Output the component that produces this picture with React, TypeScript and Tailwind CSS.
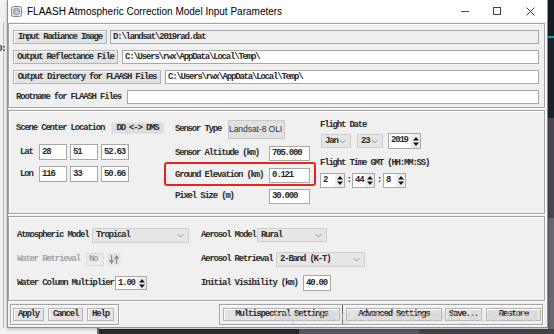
import React from "react";

const M =
  "font-['Liberation_Mono',monospace] text-[9px] font-bold tracking-[-1.2px] leading-none whitespace-nowrap";
const INK = "text-[#2a2a2a]";
const ETCH =
  "border border-[#a3a3a3] shadow-[inset_1px_1px_0_#ffffff,1px_1px_0_#ffffff]";

function Btn({ w, h = "h-[14px]", children }: { w: string; h?: string; children: React.ReactNode }) {
  return (
    <div
      className={`${w} ${h} shrink-0 flex items-center justify-center bg-[#e3e3e3] border border-[#b5b5b5] shadow-[inset_1px_1px_0_#fafafa] ${M} ${INK}`}
    >
      {children}
    </div>
  );
}

function Field({ w, h, value, gray }: { w: string; h: string; value?: string; gray?: boolean }) {
  return (
    <div
      className={`${w} ${h} shrink-0 flex items-center pl-[2px] border border-[#a8a8a8] overflow-hidden ${
        gray ? "bg-[#efefef]" : "bg-white"
      } ${M} ${INK}`}
    >
      {value}
    </div>
  );
}

function Chevron() {
  return (
    <svg width="7" height="5" viewBox="0 0 7 5" className="shrink-0">
      <polyline points="0.5,1 3.5,4 6.5,1" fill="none" stroke="#8a8a8a" strokeWidth="0.9" />
    </svg>
  );
}

function Drop({ w, h, value }: { w: string; h: string; value: string }) {
  return (
    <div
      className={`${w} ${h} shrink-0 flex items-center justify-between pl-[3px] pr-[4px] bg-[#e6e6e6] border border-[#cfcfcf] ${M} ${INK}`}
    >
      <span>{value}</span>
      <Chevron />
    </div>
  );
}

function Arrows() {
  return (
    <svg width="6" height="9" viewBox="0 0 6 9">
      <path d="M3 0 L6 3.6 H0 Z M0 5.4 H6 L3 9 Z" fill="#151515" />
    </svg>
  );
}

function Spin({ w, h, value }: { w: string; h: string; value: string }) {
  return (
    <div className={`${w} ${h} shrink-0 flex items-stretch border border-[#a8a8a8] bg-white`}>
      <div className={`flex-1 pl-[2px] pt-[2px] flex items-start ${M} ${INK}`}>{value}</div>
      <div className="w-[9px] flex items-center justify-center bg-[#ececec]">
        <Arrows />
      </div>
    </div>
  );
}

function Label({ w, children, gray }: { w: string; children: React.ReactNode; gray?: boolean }) {
  return (
    <div className={`${w} shrink-0 ${M} ${gray ? "text-[#a3a3a3]" : INK}`}>{children}</div>
  );
}

export default function App() {
  return (
    <div className="relative w-[554px] h-[334px] overflow-hidden bg-[#f1f1f1]">
      {/* desktop behind the dialog */}
      <div className="absolute left-[3px] top-[22px] w-[1px] h-[306px] bg-[#b8b8b8]" />
      <div className={`absolute left-[-3px] top-[45px] ${M} ${INK}`}>D:</div>
      <div className="absolute left-[548px] top-0 w-[6px] h-[334px] flex flex-col">
        <div className="h-[36px] bg-[#141d23]" />
        <div className="h-[2px] bg-[#1f9d9f]" />
        <div className="h-[80px] bg-[#1a2329]" />
        <div className="h-[100px] bg-[#4a4650]" />
        <div className="flex-1 bg-[#6b6570]" />
      </div>
      <div className="absolute left-[97px] top-[326px] w-[2px] h-[8px] bg-[#707070]" />
      <div className="absolute left-[99px] top-[329px] w-[455px] h-[5px] flex">
        <div className="w-[200px] bg-[#2a272e]" />
        <div className="w-[120px] bg-[#5a5560]" />
        <div className="flex-1 bg-[#46424c]" />
      </div>

      {/* dialog window */}
      <div className="absolute left-[7px] top-0 w-[541px] h-[328px] flex flex-col bg-[#f0f0f0] border-x border-b border-[#8f8f8f] shadow-[0_1px_3px_rgba(0,0,0,0.25)]">
        {/* title bar */}
        <div className="h-[22px] shrink-0 bg-white flex items-center">
          <div className="ml-[3px] w-[11px] h-[11px]">
            <svg width="11" height="11" viewBox="0 0 11 11">
              <rect x="0.5" y="0.5" width="10" height="10" rx="2" fill="#e4e8eb" stroke="#7f8c95" />
              <circle cx="5.5" cy="5.5" r="3.2" fill="#c9d4db" stroke="#6f7c85" strokeWidth="0.8" />
              <path d="M3 5.2 Q5.5 3.6 8 5.2" fill="none" stroke="#6f7c85" strokeWidth="0.7" />
            </svg>
          </div>
          <div className="ml-[5px] font-['Liberation_Sans',sans-serif] text-[10px] text-black whitespace-nowrap">
            FLAASH Atmospheric Correction Model Input Parameters
          </div>
          <div className="ml-auto flex h-full">
            <div className="w-[33px] flex items-center justify-center">
              <div className="w-[8px] h-[1px] bg-[#444]" />
            </div>
            <div className="w-[32px] flex items-center justify-center">
              <div className="w-[8px] h-[8px] border border-[#444]" />
            </div>
            <div className="w-[34px] flex items-center justify-center">
              <svg width="9" height="9" viewBox="0 0 9 9">
                <path d="M0.5 0.5 L8.5 8.5 M8.5 0.5 L0.5 8.5" stroke="#444" strokeWidth="1" />
              </svg>
            </div>
          </div>
        </div>

        {/* body */}
        <div className="flex-1 flex flex-col pr-[2px]">
          {/* files frame */}
          <div className={`mt-[1px] h-[85px] ${ETCH} pt-[6px] pl-[4px] pr-[5px] flex flex-col gap-[6px]`}>
            <div className="h-[14px] flex gap-[3px]">
              <Btn w="w-[94px]">Input Radiance Image</Btn>
              <Field w="flex-1" h="h-[14px]" value="D:\landsat\2019rad.dat" gray />
            </div>
            <div className="h-[14px] flex gap-[4px]">
              <Btn w="w-[105px]">Output Reflectance File</Btn>
              <Field w="flex-1" h="h-[14px]" value="C:\Users\rwx\AppData\Local\Temp\" />
            </div>
            <div className="h-[14px] flex gap-[4px]">
              <Btn w="w-[148px]">Output Directory for FLAASH Files</Btn>
              <Field w="flex-1" h="h-[14px]" value="C:\Users\rwx\AppData\Local\Temp\" />
            </div>
            <div className="h-[14px] flex items-center">
              <div className={`w-[114px] pl-[3px] shrink-0 ${M} ${INK}`}>Rootname for FLAASH Files</div>
              <Field w="flex-1" h="h-[14px]" />
            </div>
          </div>

          {/* scene frame */}
          <div className={`relative mt-[2px] h-[104px] ${ETCH} flex`}>
            <div className="w-[166px] pl-[7px] pt-[11px] flex flex-col">
              <div className="h-[12px] flex items-center">
                <Label w="w-[95px]">Scene Center Location</Label>
                <div className={`w-[53px] h-[12px] flex items-center justify-center bg-[#dedede] border border-[#e6e6e6] ${M} ${INK}`}>
                  DD &lt;-&gt; DMS
                </div>
              </div>
              <div className="mt-[10px] h-[16px] flex items-center pl-[4px]">
                <Label w="w-[19px]">Lat</Label>
                <div className="flex gap-[3px]">
                  <Field w="w-[28px]" h="h-[16px]" value="28" />
                  <Field w="w-[28px]" h="h-[16px]" value="51" />
                  <Field w="w-[28px]" h="h-[16px]" value="52.63" />
                </div>
              </div>
              <div className="mt-[6px] h-[16px] flex items-center pl-[4px]">
                <Label w="w-[19px]">Lon</Label>
                <div className="flex gap-[3px]">
                  <Field w="w-[28px]" h="h-[16px]" value="116" />
                  <Field w="w-[28px]" h="h-[16px]" value="33" />
                  <Field w="w-[28px]" h="h-[16px]" value="50.66" />
                </div>
              </div>
            </div>

            <div className="w-[145px] pt-[9px] flex flex-col">
              <div className="h-[19px] flex items-center">
                <Label w="w-[53px]">Sensor Type</Label>
                <div className="w-[57px] h-[19px] overflow-hidden flex items-center bg-[#e1e1e1] border border-[#c9c9c9] font-['Liberation_Sans',sans-serif] text-[8.6px] tracking-[-0.1px] text-[#333] whitespace-nowrap">
                  Landsat-8 OLI
                </div>
              </div>
              <div className="mt-[7px] h-[15px] flex items-center">
                <Label w="w-[94px]">Sensor Altitude (km)</Label>
                <Field w="w-[41px]" h="h-[15px]" value="705.000" />
              </div>
              <div className="mt-[7px] h-[15px] flex items-center">
                <Label w="w-[94px]">Ground Elevation (km)</Label>
                <Field w="w-[41px]" h="h-[15px]" value="0.121" />
              </div>
              <div className="mt-[6px] h-[15px] flex items-center">
                <Label w="w-[94px]">Pixel Size (m)</Label>
                <Field w="w-[41px]" h="h-[15px]" value="30.000" />
              </div>
            </div>

            <div className="flex-1 pt-[8px] flex flex-col">
              <div className={`h-[12px] flex items-center ${M} ${INK}`}>Flight Date</div>
              <div className="mt-[2px] h-[16px] flex items-center">
                <div className="ml-[1px]">
                  <Drop w="w-[30px]" h="h-[14px]" value="Jan" />
                </div>
                <div className="ml-[6px]">
                  <Drop w="w-[26px]" h="h-[14px]" value="23" />
                </div>
                <div className="ml-[5px]">
                  <Spin w="w-[33px]" h="h-[16px]" value="2019" />
                </div>
              </div>
              <div className={`mt-[8px] h-[12px] flex items-center ${M} ${INK}`}>Flight Time GMT (HH:MM:SS)</div>
              <div className="mt-[4px] h-[15px] flex items-center">
                <Spin w="w-[25px]" h="h-[15px]" value="2" />
                <div className={`w-[7px] text-center ${M} ${INK}`}>:</div>
                <Spin w="w-[23px]" h="h-[15px]" value="44" />
                <div className={`w-[8px] text-center ${M} ${INK}`}>:</div>
                <Spin w="w-[23px]" h="h-[15px]" value="8" />
              </div>
            </div>

            {/* red annotation box */}
            <div className="absolute left-[155px] top-[51px] w-[152px] h-[24px] border-2 border-[#e8241f] rounded-[3px]" />
          </div>

          {/* atmosphere frame */}
          <div className={`mt-[2px] h-[85px] ${ETCH} pt-[10px] pl-[8px] flex flex-col gap-[8px]`}>
            <div className="h-[16px] flex items-center">
              <div className="w-[184px] flex items-center">
                <Label w="w-[75px]">Atmospheric Model</Label>
                <Drop w="w-[97px]" h="h-[15px]" value="Tropical" />
              </div>
              <Label w="w-[56px]">Aerosol Model</Label>
              <Drop w="w-[70px]" h="h-[14px]" value="Rural" />
            </div>
            <div className="h-[16px] flex items-center">
              <div className="w-[184px] flex items-center">
                <Label w="w-[69px]" gray>
                  Water Retrieval
                </Label>
                <div className={`w-[18px] h-[13px] flex items-center pl-[2px] bg-[#ebebeb] border border-[#dadada] ${M} text-[#a0a0a0]`}>
                  No
                </div>
                <div className="ml-[3px] w-[14px] h-[13px] flex items-center justify-center bg-[#e6e6e6]">
                  <svg width="10" height="9" viewBox="0 0 10 9">
                    <path d="M2.5 0 V7 M0.5 5 L2.5 8 L4.5 5" fill="none" stroke="#8c8c8c" strokeWidth="1.3" />
                    <path d="M7.5 9 V2 M5.5 4 L7.5 1 L9.5 4" fill="none" stroke="#8c8c8c" strokeWidth="1.3" />
                  </svg>
                </div>
              </div>
              <Label w="w-[75px]">Aerosol Retrieval</Label>
              <Drop w="w-[89px]" h="h-[15px]" value="2-Band (K-T)" />
            </div>
            <div className="h-[16px] flex items-center">
              <div className="w-[184px] flex items-center">
                <Label w="w-[98px]">Water Column Multiplier</Label>
                <Spin w="w-[32px]" h="h-[14px]" value="1.00" />
              </div>
              <Label w="w-[102px]">Initial Visibility (km)</Label>
              <Field w="w-[28px]" h="h-[16px]" value="40.00" />
            </div>
          </div>

          {/* buttons row */}
          <div className="mt-[3px] h-[21px] flex pl-[2px]">
            <div className={`w-[109px] h-[21px] ${ETCH} flex items-center pl-[2px] gap-[4px]`}>
              <Btn w="w-[31px]" h="h-[13px]">Apply</Btn>
              <Btn w="w-[35px]" h="h-[13px]">Cancel</Btn>
              <Btn w="w-[27px]" h="h-[13px]">Help</Btn>
            </div>
            <div className={`ml-[100px] w-[324px] h-[21px] ${ETCH} flex items-center pl-[3px]`}>
              <Btn w="w-[117px]" h="h-[13px]">Multispectral Settings</Btn>
              <div className="ml-[2px] w-[1px] h-[19px] bg-[#5e5e5e]" />
              <div className="ml-[3px]">
                <Btn w="w-[96px]" h="h-[13px]">Advanced Settings</Btn>
              </div>
              <div className="ml-[3px]">
                <Btn w="w-[37px]" h="h-[13px]">Save...</Btn>
              </div>
              <div className="ml-[4px]">
                <Btn w="w-[55px]" h="h-[13px]">Restore</Btn>
              </div>
            </div>
          </div>
        </div>
      </div>

      {/* watermark */}
      <div className="absolute left-[274px] top-[304px] font-['Liberation_Sans',sans-serif] text-[15.5px] text-white/45 [text-shadow:0_0_1px_rgba(120,120,120,0.4)] whitespace-nowrap">
        https://blog.csdn.net/weixin_41684453
      </div>
    </div>
  );
}
